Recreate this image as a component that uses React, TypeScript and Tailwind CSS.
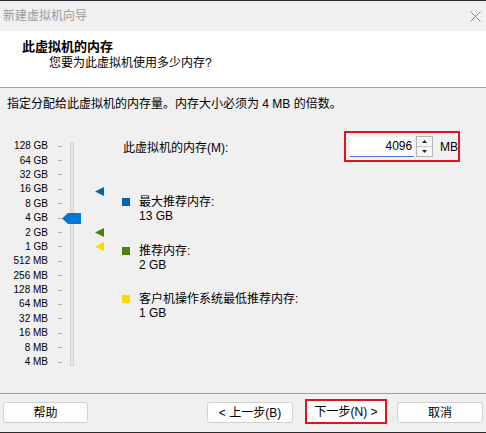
import React from 'react';

const sizes = [
  '128 GB', '64 GB', '32 GB', '16 GB', '8 GB', '4 GB', '2 GB', '1 GB',
  '512 MB', '256 MB', '128 MB', '64 MB', '32 MB', '16 MB', '8 MB', '4 MB',
];

const legend = [
  { color: 'bg-[#0063b1]', title: '最大推荐内存:', value: '13 GB', gap: 'mt-[33px]' },
  { color: 'bg-[#498205]', title: '推荐内存:', value: '2 GB', gap: 'mt-[21px]' },
  { color: 'bg-[#ffd800]', title: '客户机操作系统最低推荐内存:', value: '1 GB', gap: 'mt-[20px]' },
];

// left-pointing marker next to the slider
const Marker: React.FC<{ color: string; top: string }> = ({ color, top }) => (
  <svg className={`absolute left-[95px] ${top}`} width="9" height="9" viewBox="0 0 9 9">
    <polygon points="0,4.5 9,0 9,9" fill={color} />
  </svg>
);

const Button: React.FC<{ label: string; className?: string }> = ({ label, className = '' }) => (
  <button className={`h-[21px] rounded-[3px] border border-[#d0d0d0] bg-[#fdfdfd] text-[12px] leading-[16px] text-black ${className}`}>
    {label}
  </button>
);

export default function App() {
  return (
    <div className="w-[486px] h-[433px] flex flex-col bg-[#f0f0f0] border-t border-b border-[#2b2b2b] font-[family-name:'Liberation_Sans','Noto_Sans_CJK_SC',sans-serif] text-[12px] leading-[16px] text-black overflow-hidden">
      {/* Title bar */}
      <div className="h-[30px] shrink-0 flex items-center justify-between pl-[3px] pr-[5px] text-[#9a9a9a]">
        <span>新建虚拟机向导</span>
        <svg width="11" height="11" viewBox="0 0 11 11">
          <path d="M0.5 0.5L10.5 10.5M10.5 0.5L0.5 10.5" stroke="#8c8c8c" strokeWidth="1" />
        </svg>
      </div>

      {/* Header */}
      <div className="h-[57px] shrink-0 bg-white border-b border-[#a0a0a0] pl-[22px] pt-[8px]">
        <div className="text-[13px] font-bold">此虚拟机的内存</div>
        <div className="pl-[27px]">您要为此虚拟机使用多少内存?</div>
      </div>

      {/* Body */}
      <div className="flex-1 flex flex-col">
        <div className="pl-[7px] pt-[8px]">指定分配给此虚拟机的内存量。内存大小必须为 4 MB 的倍数。</div>

        <div className="flex-1 flex">
          {/* Slider */}
          <div className="w-[122px] shrink-0">
            <div className="relative mt-[27px] flex">
              <div className="w-[48px] flex flex-col">
                {sizes.map((s) => (
                  <div key={s} className="h-[14.4px] flex items-center justify-end text-[10px] leading-[12px] whitespace-nowrap">
                    {s}
                  </div>
                ))}
              </div>
              <div className="ml-[10px] w-[4px] flex flex-col">
                {sizes.map((s) => (
                  <div key={s} className="h-[14.4px] flex items-center">
                    <div className="w-[4px] h-px bg-[#b0b0b0]" />
                  </div>
                ))}
              </div>
              <div className="ml-[8px] my-[3px] w-[4px] bg-[#e6e6e6] border border-[#d2d2d2]" />

              <svg className="absolute left-[62px] top-[74px]" width="19" height="11" viewBox="0 0 19 11">
                <polygon points="0,5.5 6,0 19,0 19,11 6,11" fill="#0078d7" />
              </svg>
              <Marker color="#0063b1" top="top-[48px]" />
              <Marker color="#498205" top="top-[89px]" />
              <Marker color="#ffd800" top="top-[103px]" />
            </div>
          </div>

          {/* Memory input and legend */}
          <div className="w-[338px] flex flex-col pt-[19px]">
            <div className="h-[31px] flex items-center justify-between">
              <span className="pl-[1px] pt-[2px]">此虚拟机的内存(M):</span>
              <div className="w-[116px] h-[31px] flex items-center border-2 border-[#e0141e] pl-[4px]">
                <div className="w-[65px] h-[20px] bg-white border-b border-[#3d7bd0] flex items-center justify-end pr-[2px]">
                  4096
                </div>
                <div className="ml-[2px] w-[17px] h-[21px] flex flex-col border border-[#b4b4b4] bg-[#f6f6f6]">
                  <div className="flex-1 flex items-center justify-center border-b border-[#c8c8c8]">
                    <svg width="5" height="3" viewBox="0 0 5 3"><polygon points="2.5,0 5,3 0,3" fill="#222" /></svg>
                  </div>
                  <div className="flex-1 flex items-center justify-center">
                    <svg width="5" height="3" viewBox="0 0 5 3"><polygon points="0,0 5,0 2.5,3" fill="#222" /></svg>
                  </div>
                </div>
                <span className="ml-[7px]">MB</span>
              </div>
            </div>

            {legend.map((item) => (
              <div key={item.title} className={`flex items-start leading-[14px] ${item.gap}`}>
                <div className={`w-[8px] h-[8px] mt-[3px] ${item.color}`} />
                <div className="ml-[9px]">
                  <div>{item.title}</div>
                  <div>{item.value}</div>
                </div>
              </div>
            ))}
          </div>
        </div>
      </div>

      {/* Buttons */}
      <div className="h-[39px] shrink-0 flex items-start border-t border-[#a0a0a0] pt-[8px] pl-[3px] pr-[3px]">
        <Button label="帮助" className="w-[85px]" />
        <div className="flex-1" />
        <Button label="< 上一步(B)" className="w-[86px]" />
        <button className="ml-[12px] -mt-[3px] w-[82px] h-[25px] border-2 border-[#e0141e] bg-[#fdfdfd] text-[12px] leading-[16px] text-black">
          下一步(N) &gt;
        </button>
        <Button label="取消" className="ml-[10px] w-[86px]" />
      </div>
    </div>
  );
}
